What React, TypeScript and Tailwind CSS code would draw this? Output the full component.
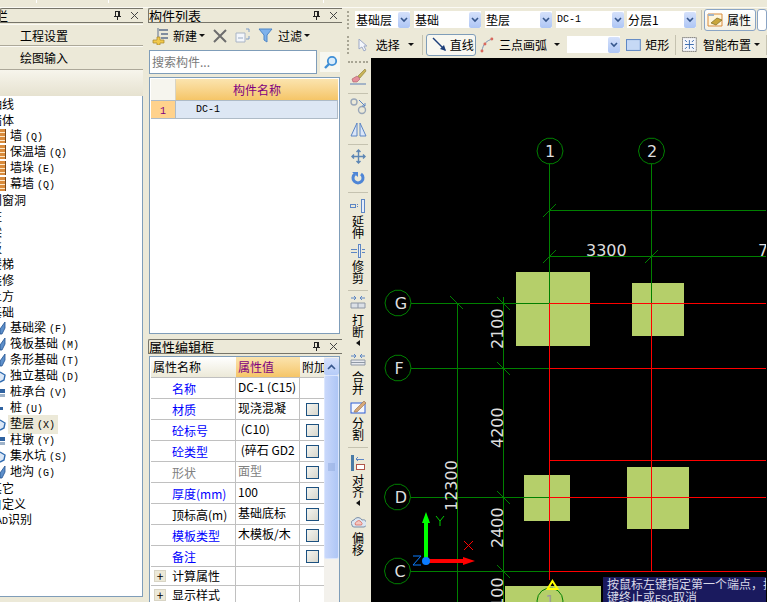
import { ReactNode } from "react";

const CJK = "[font-family:'Noto_Sans_CJK_SC','Liberation_Sans',sans-serif]";
const MONO = "[font-family:'Liberation_Mono','Noto_Sans_CJK_SC',monospace]";

// small dock title buttons
const PinClose = () => (
  <div className="flex items-center gap-[8px] pr-[4px]">
    <svg width="9" height="11" viewBox="0 0 9 11" shapeRendering="crispEdges">
      <path d="M2 1h5v5H2zM1 6h7v1H1zM4 7h1v3H4zM5 1h1v5H5z" fill="#222" />
      <path d="M3 2h2v4H3z" fill="#ece9d8" />
    </svg>
    <svg width="9" height="9" viewBox="0 0 9 9">
      <path d="M1 1l7 7M8 1l-7 7" stroke="#444" strokeWidth="1" fill="none" />
    </svg>
  </div>
);

const DockTitle = ({ title, clip }: { title: string; clip?: boolean }) => (
  <div className="h-[15px] flex items-center justify-between border-y border-l border-[#77756a] bg-[#ece9d8] overflow-hidden rounded-tl-[2px]">
    <span className={`text-[13px] leading-[14px] whitespace-nowrap ${clip ? "-ml-[58px]" : ""}`}>{title}</span>
    <PinClose />
  </div>
);

const Combo = ({ text, w, mono }: { text?: string; w: string; mono?: boolean }) => (
  <div className={`${w} h-[17px] bg-white flex items-center justify-between`}>
    <span className={`pl-[1px] whitespace-nowrap ${mono ? `${MONO} text-[10px]` : "text-[12px]"}`}>{text}</span>
    <span className="w-[12px] h-[16px] bg-gradient-to-b from-[#d5e1fb] to-[#aec6f5] flex items-center justify-center rounded-[2px]">
      <svg width="8" height="6" viewBox="0 0 8 6">
        <path d="M1 1l3 3 3-3" stroke="#36568c" strokeWidth="1.6" fill="none" />
      </svg>
    </span>
  </div>
);

const Caret = () => (
  <svg width="6" height="4" viewBox="0 0 6 4" className="shrink-0">
    <path d="M0 0h6L3 3z" fill="#111" />
  </svg>
);

const Sep = () => <div className="w-px h-[20px] bg-[#c5c2b0]" />;

const treeRows: { t: string; k?: string; icon?: string; sel?: boolean }[] = [
  { t: "轴线" },
  { t: "墙体" },
  { t: "墙", k: "(Q)", icon: "brick" },
  { t: "保温墙", k: "(Q)", icon: "brick" },
  { t: "墙垛", k: "(E)", icon: "brick" },
  { t: "幕墙", k: "(Q)", icon: "brick" },
  { t: "门窗洞" },
  { t: "柱" },
  { t: "梁" },
  { t: "板" },
  { t: "楼梯" },
  { t: "装修" },
  { t: "土方" },
  { t: "基础" },
  { t: "基础梁", k: "(F)", icon: "blue" },
  { t: "筏板基础", k: "(M)", icon: "blue" },
  { t: "条形基础", k: "(T)", icon: "blue" },
  { t: "独立基础", k: "(D)", icon: "ring" },
  { t: "桩承台", k: "(V)", icon: "small" },
  { t: "桩", k: "(U)", icon: "dot" },
  { t: "垫层", k: "(X)", icon: "ring", sel: true },
  { t: "柱墩", k: "(Y)", icon: "small" },
  { t: "集水坑", k: "(S)", icon: "ring" },
  { t: "地沟", k: "(G)", icon: "blue" },
  { t: "其它" },
  { t: "自定义" },
  { t: "CAD识别" },
];

const TreeIcon = ({ kind }: { kind: string }) => {
  if (kind === "brick")
    return (
      <svg width="6" height="14" viewBox="0 0 6 14" shapeRendering="crispEdges">
        <rect width="5" height="14" fill="#d98b3c" />
        <path d="M0 3h5M0 7h5M0 11h5" stroke="#fde9c9" />
        <path d="M5 0v14" stroke="#7a4a1c" />
      </svg>
    );
  if (kind === "ring")
    return (
      <svg width="6" height="14" viewBox="0 0 6 14">
        <path d="M0 3l5 3-1 5-4 2" stroke="#2f6bb0" strokeWidth="1.4" fill="#dbe7f6" />
      </svg>
    );
  if (kind === "small")
    return (
      <svg width="6" height="14" viewBox="0 0 6 14" shapeRendering="crispEdges">
        <rect x="0" y="4" width="5" height="4" fill="#2f62a0" />
        <rect x="0" y="9" width="5" height="3" fill="#9fb3c9" />
      </svg>
    );
  if (kind === "dot")
    return (
      <svg width="6" height="14" viewBox="0 0 6 14" shapeRendering="crispEdges">
        <rect x="0" y="6" width="3" height="3" fill="#2f62a0" />
      </svg>
    );
  return (
    <svg width="6" height="14" viewBox="0 0 6 14">
      <path d="M0 8L5 1v6L2 13H0z" fill="#5d8fca" stroke="#22528f" strokeWidth=".8" />
    </svg>
  );
};

const LeftPanel = () => (
  <div className="w-[143px] shrink-0 flex flex-col">
    <DockTitle title="模块导航栏" clip />
    <div className="h-[23px] mt-[1px] border-y border-[#fbfaf4] bg-[#ece9d8] flex items-center pl-[20px] text-[12px] shadow-[inset_0_-1px_0_#aca899]">
      工程设置
    </div>
    <div className="h-[23px] border-b border-[#aca899] bg-[#ece9d8] flex items-center pl-[20px] text-[12px]">
      绘图输入
    </div>
    <div className="h-[26px] bg-gradient-to-b from-[#f7f5ec] to-[#e6e2d0]" />
    <div className="h-[501px] bg-white border-r border-b border-[#7f9db9] overflow-hidden">
      {treeRows.map((r) => (
        <div key={r.t} className="h-[16px] flex items-center whitespace-nowrap text-[12px] leading-[16px]">
          {r.icon ? (
            <>
              <span className="w-[8px] shrink-0 flex">
                <TreeIcon kind={r.icon} />
              </span>
              <span className={`pl-[2px] pr-[3px] ${r.sel ? "bg-[#ece9d8]" : ""}`}>
                {r.t}
                <span className={`${MONO} text-[10px] pl-[3px]`}>{r.k}</span>
              </span>
            </>
          ) : (
            <span className="-ml-[10px]">
              {r.t.startsWith("CAD") ? (
                <>
                  <span className={`${MONO} text-[10px]`}>CAD</span>识别
                </>
              ) : (
                r.t
              )}
            </span>
          )}
        </div>
      ))}
    </div>
  </div>
);

const propRows: { n: string; c: string; v: string; vc?: string; check?: boolean }[] = [
  { n: "名称", c: "text-[#0000ff]", v: "DC-1 (C15)" },
  { n: "材质", c: "text-[#0000ff]", v: "现浇混凝", check: true },
  { n: "砼标号", c: "text-[#0000ff]", v: " (C10)", check: true },
  { n: "砼类型", c: "text-[#0000ff]", v: " (碎石 GD2", check: true },
  { n: "形状", c: "text-[#808080]", v: "面型", vc: "text-[#808080]", check: true },
  { n: "厚度(mm)", c: "text-[#0000ff]", v: "100", check: true },
  { n: "顶标高(m)", c: "text-black", v: "基础底标", check: true },
  { n: "模板类型", c: "text-[#0000ff]", v: "木模板/木", check: true },
  { n: "备注", c: "text-[#0000ff]", v: "", check: true },
];

const CheckBox = () => (
  <span className="block w-[13px] h-[13px] border border-[#1c5180] bg-gradient-to-br from-[#f4f4ef] to-[#d8d7cd]" />
);

const MidPanel = () => (
  <div className="w-[194px] shrink-0 ml-[5px] flex flex-col">
    <DockTitle title="构件列表" />
    <div className="h-[25px] flex items-center pl-[4px] text-[12px]">
      <svg width="18" height="18" viewBox="0 0 18 18">
        <path d="M7 3h9M9 7h7M9 11h7" stroke="#5c6f8c" strokeWidth="1.3" />
        <path d="M6 1v10" stroke="#5c6f8c" />
        <path d="M1 13h4v-3h3v3h4v3H8v2H5v-2H1z" fill="#f2c94c" stroke="#a8842a" strokeWidth=".7" />
      </svg>
      <span className="ml-[3px]">新建</span>
      <span className="ml-[2px] mr-[8px]"><Caret /></span>
      <svg width="14" height="14" viewBox="0 0 14 14">
        <path d="M1 1l12 12M13 1L1 13" stroke="#6d6d6d" strokeWidth="2" />
      </svg>
      <svg width="16" height="15" viewBox="0 0 16 15" className="ml-[8px]">
        <path d="M1 5h9v9H1z" fill="#f3f6fb" stroke="#a9b4c4" />
        <path d="M3 9h5v2H3z" fill="#c6d0de" />
        <path d="M11 1h3v3M14 8v3h-3" stroke="#7d9bc7" fill="none" />
      </svg>
      <svg width="15" height="15" viewBox="0 0 15 15" className="ml-[7px]">
        <path d="M1 1h13L9 7v7l-3-2V7z" fill="#7fb2ec" stroke="#4f86c6" />
      </svg>
      <span className="ml-[5px]">过滤</span>
      <span className="ml-[2px]"><Caret /></span>
    </div>
    <div className="h-[24px] mt-[2px] flex items-center pl-[1px]">
      <div className="w-[168px] h-[24px] bg-white border border-[#7f9db9] flex items-center pl-[2px] text-[12px] text-[#7a7a7a]">
        搜索构件...
      </div>
      <div className="ml-[3px] w-[20px] h-[20px] bg-[#f7f7f0] flex items-center justify-center">
        <svg width="15" height="15" viewBox="0 0 15 15">
          <circle cx="9" cy="6" r="4.2" fill="#d9ecfb" stroke="#3f8fd6" strokeWidth="1.8" />
          <path d="M6 9l-4 4" stroke="#3f8fd6" strokeWidth="2.4" />
        </svg>
      </div>
    </div>
    <div className="h-[257px] mt-[3px] ml-[1px] mr-[2px] bg-white border border-[#7f9db9] pl-[1px] pt-[1px] pr-[1px]">
      <div className="flex h-[21px]">
        <div className="w-[25px] bg-[#f6f5ee] border-r border-[#d8d4c4]" />
        <div className="flex-1 bg-gradient-to-b from-[#fbe4ae] to-[#f5c567] flex items-center justify-center text-[12px] text-[#800080]">
          构件名称
        </div>
      </div>
      <div className="flex h-[19px] border-b border-[#aebbc7] border-t">
        <div className="w-[25px] bg-[#ffd28c] border-r border-[#aebbc7] text-[#800080] text-[10px] leading-[18px] pl-[9px]">
          <span className={MONO}>1</span>
        </div>
        <div className={`flex-1 bg-[#dde7f4] border-r border-[#aebbc7] pl-[20px] text-[10px] leading-[18px] ${MONO}`}>
          DC-1
        </div>
      </div>
    </div>
    <div className="h-[5px]" />
    <DockTitle title="属性编辑框" />
    <div className="flex-1 mt-[2px] ml-[1px] mr-[2px] flex bg-white border-l border-t border-r border-[#7f9db9] pl-[1px] overflow-hidden">
      <div className="w-[173px] shrink-0 text-[12px]">
        <div className="grid grid-cols-[85px_64px_24px] h-[21px] border-b border-[#c0c0c0]">
          <div className="bg-gradient-to-b from-white to-[#ece9d8] pl-[2px] leading-[20px]">属性名称</div>
          <div className="bg-gradient-to-b from-[#fbe4ae] to-[#f5c567] text-[#800080] pl-[2px] leading-[20px]">属性值</div>
          <div className="bg-gradient-to-b from-white to-[#ece9d8] pl-[2px] leading-[20px] overflow-hidden whitespace-nowrap">附加</div>
        </div>
        {propRows.map((r) => (
          <div key={r.n} className="grid grid-cols-[85px_64px_24px] h-[21px] border-b border-[#c0c0c0]">
            <div className={`border-r border-[#c0c0c0] pl-[21px] leading-[21px] ${r.c}`}>{r.n}</div>
            <div className={`border-r border-[#c0c0c0] pl-[2px] leading-[17px] whitespace-pre overflow-hidden ${r.vc ?? ""}`}>{r.v}</div>
            <div className="flex items-center justify-center">{r.check && <CheckBox />}</div>
          </div>
        ))}
        {["计算属性", "显示样式"].map((g) => (
          <div key={g} className="grid grid-cols-[85px_64px_24px] h-[19px] border-b border-[#c0c0c0]">
            <div className="border-r border-[#c0c0c0] flex items-center pl-[3px]">
              <span className="w-[12px] h-[12px] bg-[#ece9d8] border border-[#d8d4c4] flex items-center justify-center text-[12px] leading-none">+</span>
              <span className="ml-[6px]">{g}</span>
            </div>
            <div className="border-r border-[#c0c0c0]" />
            <div />
          </div>
        ))}
      </div>
      <div className="w-[15px] shrink-0 bg-[#f3f1ec] flex flex-col">
        <div className="h-[17px] mt-[1px] bg-gradient-to-b from-[#d5e1fb] to-[#b5cbf8] rounded-[2px] flex items-center justify-center">
          <svg width="9" height="6" viewBox="0 0 9 6">
            <path d="M1 5l3.5-3.5L8 5" stroke="#36568c" strokeWidth="1.6" fill="none" />
          </svg>
        </div>
        <div className="h-[184px] bg-gradient-to-r from-[#c9d8fb] to-[#aec6f5] rounded-[2px] border border-[#dbe6fd] flex items-center justify-center">
          <svg width="7" height="8" viewBox="0 0 7 8">
            <path d="M0 1h7M0 3h7M0 5h7M0 7h7" stroke="#8fa9dc" />
          </svg>
        </div>
      </div>
    </div>
  </div>
);

// one button on the vertical edit strip
const Tool = ({ mt, icon, text, caret }: { mt: string; icon: ReactNode; text?: string[]; caret?: boolean }) => (
  <div className={`flex flex-col items-center ${mt}`}>
    {icon}
    {text?.map((c) => (
      <span key={c} className="text-[12px] leading-[12px]">{c}</span>
    ))}
    {caret && (
      <svg width="4" height="6" viewBox="0 0 4 6" className="mt-[2px]">
        <path d="M4 0v6L0 3z" fill="#111" />
      </svg>
    )}
  </div>
);

const HSep = ({ mt }: { mt: string }) => <div className={`w-[20px] h-px bg-[#c5c2b0] ${mt}`} />;

const EditStrip = () => (
  <div className="w-[26px] shrink-0 flex flex-col items-center bg-[#ece9d8] h-[544px] overflow-hidden">
    <div className="mt-[3px] w-[20px] h-[2px] border-t-2 border-dotted border-[#a8a594]" />
    <Tool mt="mt-[5px]" icon={
      <svg width="18" height="18" viewBox="0 0 18 18">
        <path d="M16 1L9 8l2 2 6-7z" fill="#c9b458" stroke="#8a7a33" strokeWidth=".6" />
        <path d="M3 11l5-3 3 3-3 3H4z" fill="#e58f9a" stroke="#a85a66" strokeWidth=".6" />
        <path d="M1 16h16" stroke="#5d7fb5" />
      </svg>
    } />
    <HSep mt="mt-[7px]" />
    <Tool mt="mt-[4px]" icon={
      <svg width="17" height="17" viewBox="0 0 17 17">
        <circle cx="4" cy="4" r="3" fill="none" stroke="#9aa7b8" strokeWidth="1.4" />
        <circle cx="12" cy="12" r="3.5" fill="none" stroke="#9aa7b8" strokeWidth="1.4" />
        <path d="M9 2l6 6M12 8h3V5" stroke="#5d86c4" fill="none" />
      </svg>
    } />
    <Tool mt="mt-[6px]" icon={
      <svg width="17" height="17" viewBox="0 0 17 17">
        <path d="M7 2v13H1zM10 2v13h6z" fill="#dbe6f8" stroke="#5d86c4" />
      </svg>
    } />
    <HSep mt="mt-[6px]" />
    <Tool mt="mt-[4px]" icon={
      <svg width="15" height="15" viewBox="0 0 15 15">
        <path d="M7.500 1v13M1 7.500h13M5.500 3l2-2 2 2M5.500 12l2 2 2-2M3 5.500l-2 2 2 2M12 5.500l2 2-2 2" stroke="#5d86b4" fill="none" strokeWidth="1.4" />
      </svg>
    } />
    <Tool mt="mt-[7px]" icon={
      <svg width="14" height="15" viewBox="0 0 14 15">
        <path d="M4 3a5 5 0 1 0 6 0" fill="none" stroke="#4f86d6" strokeWidth="3" />
        <path d="M1 1h6v5z" fill="#4f86d6" />
      </svg>
    } />
    <HSep mt="mt-[6px]" />
    <Tool mt="mt-[5px]" text={["延", "伸"]} icon={
      <svg width="16" height="15" viewBox="0 0 16 15" className="mb-[2px]" shapeRendering="crispEdges">
        <path d="M0 6h5v3H0zM7 6h1M7 8h1" fill="none" stroke="#5d86c4" />
        <path d="M11 1h3v13h-3z" fill="#e6edf9" stroke="#5d86c4" />
      </svg>
    } />
    <Tool mt="mt-[4px]" text={["修", "剪"]} icon={
      <svg width="16" height="15" viewBox="0 0 16 15" className="mb-[2px]" shapeRendering="crispEdges">
        <path d="M1 6h6M1 9h6M12 6h3M12 9h3" stroke="#5d86c4" />
        <path d="M8 1h2v13H8z" fill="#e6edf9" stroke="#5d86c4" />
      </svg>
    } />
    <HSep mt="mt-[6px]" />
    <Tool mt="mt-[4px]" caret text={["打", "断"]} icon={
      <svg width="16" height="15" viewBox="0 0 16 15" className="mb-[4px]">
        <path d="M1 3h5M15 3h-5M4 1l2 2-2 2M12 1l-2 2 2 2" stroke="#5d86c4" fill="none" />
        <path d="M1 8h14v5H1zM8 8v5" fill="#dbe0e6" stroke="#8f98a5" />
      </svg>
    } />
    <Tool mt="mt-[7px]" text={["合", "并"]} icon={
      <svg width="16" height="13" viewBox="0 0 16 13" className="mb-[5px]">
        <path d="M1 3h5M15 3h-5M4 1l2 2-2 2M12 1l-2 2 2 2" stroke="#5d86c4" fill="none" />
        <path d="M1 7h14v5H1zM1 9.500h14" fill="#e6e8ee" stroke="#8f98a5" />
      </svg>
    } />
    <Tool mt="mt-[4px]" text={["分", "割"]} icon={
      <svg width="17" height="15" viewBox="0 0 17 15" className="mb-[3px]">
        <rect x="1" y="4" width="14" height="10" fill="#f4f6fb" stroke="#2e5fd6" />
        <path d="M5 11L14 2l2 2-9 9H4z" fill="#d6a97a" stroke="#9a6f45" strokeWidth=".6" />
      </svg>
    } />
    <HSep mt="mt-[6px]" />
    <Tool mt="mt-[7px]" caret text={["对", "齐"]} icon={
      <svg width="14" height="16" viewBox="0 0 14 16" className="mb-[3px]" shapeRendering="crispEdges">
        <rect x="0" y="0" width="3" height="16" fill="#4a7ba6" />
        <path d="M5 4h8M7 2L5 4l2 2" stroke="#5d86c4" fill="none" />
        <path d="M5 9h8v5H5z" fill="#fff" stroke="#b0564a" />
      </svg>
    } />
    <Tool mt="mt-[10px]" text={["偏", "移"]} icon={
      <svg width="15" height="13" viewBox="0 0 15 13" className="mb-[3px]">
        <path d="M1 9a3 3 0 0 1 2-5 4.500 4.500 0 0 1 8 0 3 3 0 0 1 2 7H3a2 2 0 0 1-2-2z" fill="#dce6f2" stroke="#7b8ea6" />
        <path d="M4.500 9a2 2 0 0 1 1-3 2.500 2.500 0 0 1 4.500 0 2 2 0 0 1 .5 3z" fill="#f5c6c0" stroke="#d9695d" strokeWidth=".8" />
      </svg>
    } />
  </div>
);

// octagonal axis bubble as the CAD view draws it
const bubble = (cx: number, cy: number, r: number) =>
  Array.from({ length: 14 }, (_, i) => {
    const a = (i / 14) * Math.PI * 2;
    return `${(cx + r * Math.cos(a)).toFixed(1)},${(cy + r * Math.sin(a)).toFixed(1)}`;
  }).join(" ");

const GREEN = "#008000";
const RED = "#ff0000";
const PAD = "#b5cf6a";
const LABEL = "#dedede";

const CadView = () => (
  <div className="relative flex-1 h-[544px] bg-black overflow-hidden">
    <svg width="395" height="544" viewBox="372 58 395 544" className="block">
      <g fill={PAD} shapeRendering="crispEdges">
        <rect x="517" y="272" width="74" height="74" />
        <rect x="633" y="283" width="52" height="53" />
        <rect x="525" y="475" width="46" height="46" />
        <rect x="628" y="467" width="62" height="62" />
        <rect x="506" y="586" width="96" height="16" />
      </g>
      <g stroke={GREEN} fill="none" shapeRendering="crispEdges">
        <path d="M550.5 164V303M652.500 164V303" />
        <path d="M550 210.500H767M550 256.500H767" />
        <path d="M412 303.500H550M412 368.500H550M412 497.500H550M412 571.500H550" />
        <path d="M458.500 303V602M504.500 297V602" />
      </g>
      <g stroke={GREEN} fill="none">
        <path d="M544 217l13-13M544 263l13-13M646 263l13-13" />
        <path d="M451 296l13 13M498 297l13 13M498 362l13 13M498 491l13 13M498 565l13 13" />
        <polygon points={bubble(551, 151, 13)} />
        <polygon points={bubble(652.5, 151, 13)} />
        <polygon points={bubble(399, 303, 13)} />
        <polygon points={bubble(399, 368, 13)} />
        <polygon points={bubble(398.5, 497, 13)} />
        <polygon points={bubble(398.5, 571, 13)} />
        <polygon points={bubble(551, 601, 13)} />
      </g>
      <g stroke={RED} fill="none" shapeRendering="crispEdges">
        <path d="M550.500 303V580M652.500 303V571" />
        <path d="M550 303.500H767M550 368.500H767M550 460.500H767M550 497.500H767M550 571.500H767" />
      </g>
      <g fill={LABEL} fontFamily="'DejaVu Sans',sans-serif" fontSize="16">
        <text x="551" y="157" textAnchor="middle">1</text>
        <text x="653" y="157" textAnchor="middle">2</text>
        <text x="402" y="309" textAnchor="middle">G</text>
        <text x="400" y="374" textAnchor="middle">F</text>
        <text x="402" y="503" textAnchor="middle">D</text>
        <text x="401" y="577" textAnchor="middle">C</text>
        <text x="587" y="256">3300</text>
        <text x="759" y="256">7</text>
        <text transform="translate(504 349) rotate(-90)">2100</text>
        <text transform="translate(504 448) rotate(-90)">4200</text>
        <text transform="translate(504 548) rotate(-90)">2400</text>
        <text transform="translate(504 618) rotate(-90)">2100</text>
        <text transform="translate(458 511) rotate(-90)">12300</text>
      </g>
      <text x="551" y="605" textAnchor="middle" fill="#9a9a9a" fontFamily="'DejaVu Sans',sans-serif" fontSize="14">1</text>
      <path d="M553.500 581l5 8h-10z" fill="none" stroke="#ffff00" strokeWidth="2" />
      {/* UCS marker */}
      <path d="M427 561V520" stroke="#00ff00" strokeWidth="4" />
      <path d="M427 512l4 11h-8z" fill="#00ff00" />
      <path d="M427 561H466" stroke={RED} strokeWidth="4" />
      <path d="M476 561l-12-4v8z" fill={RED} />
      <circle cx="427" cy="561" r="4" fill="#0a7cff" />
      <path d="M437 516l4 5 4-5M441 521v5" stroke="#00c800" fill="none" />
      <path d="M465 541l9 9M474 541l-9 9" stroke={RED} />
      <path d="M414 556h8l-8 9h8" stroke="#0a7cff" fill="none" />
    </svg>
    <div className="absolute left-[232px] bottom-0 w-[163px] h-[25px] bg-[#1a1a5e] text-[#d8d8e8] text-[12px] leading-[13px] pl-[4px] whitespace-nowrap overflow-hidden">
      <div>按鼠标左键指定第一个端点，按</div>
      <div>键终止或<span className={`${MONO} text-[10px]`}>ESC</span>取消</div>
    </div>
  </div>
);

const RightPanel = () => (
  <div className="flex-1 ml-[3px] flex flex-col min-w-0 -mt-[8px] overflow-hidden">
    <div className="h-[8px]" />
    {/* first toolbar row */}
    <div className="h-[23px] flex items-center pl-[2px] text-[12px]">
      <div className="w-[3px] h-[18px] border-l-2 border-dotted border-[#a8a594]" />
      <div className="w-[5px]" />
      <Combo text="基础层" w="w-[56px]" />
      <div className="w-[4px]" />
      <Combo text="基础" w="w-[68px]" />
      <div className="w-[4px]" />
      <Combo text="垫层" w="w-[68px]" />
      <div className="w-[4px]" />
      <Combo text="DC-1" w="w-[69px]" mono />
      <div className="w-[3px]" />
      <Combo text="分层1" w="w-[70px]" />
      <div className="w-[5px]" />
      <Sep />
      <div className="w-[2px]" />
      <div className="w-[52px] h-[22px] border border-[#8aa4c4] rounded-[3px] bg-gradient-to-b from-white to-[#f3f1e6] flex items-center pl-[2px] shrink-0">
        <svg width="18" height="16" viewBox="0 0 18 16">
          <path d="M1 2h14v12H1z" fill="#fff6dc" stroke="#d98b3c" />
          <path d="M1 2h6v2H1z" fill="#9fb3c9" />
          <path d="M4 11l6-5 5 2-6 5z" fill="#c9a63c" stroke="#7a6a22" strokeWidth=".7" />
        </svg>
        <span className="ml-[2px]">属性</span>
      </div>
      <div className="ml-[1px] w-[10px] h-[22px] bg-white border border-[#8aa4c4] rounded-[3px] shrink-0" />
    </div>
    {/* second toolbar row */}
    <div className="h-[27px] flex items-center pl-[2px] text-[12px] whitespace-nowrap">
      <div className="w-[3px] h-[18px] border-l-2 border-dotted border-[#a8a594]" />
      <svg width="10" height="14" viewBox="0 0 10 14" className="ml-[8px]">
        <path d="M1 1v10l3-2 2 4 2-1-2-4h3z" fill="#f4f6fb" stroke="#9aa7c4" />
      </svg>
      <span className="ml-[8px]">选择</span>
      <span className="ml-[8px] mr-[8px]"><Caret /></span>
      <Sep />
      <div className="ml-[3px] w-[51px] h-[22px] border border-[#7f9db9] rounded-[3px] bg-[#f8f7f0] flex items-center pl-[5px]">
        <svg width="15" height="15" viewBox="0 0 15 15">
          <path d="M1 1l12 12" stroke="#1d3f7a" strokeWidth="1.4" />
          <path d="M14 14l-6-2 4-4z" fill="#1d3f7a" />
        </svg>
        <span className="ml-[3px]">直线</span>
      </div>
      <svg width="14" height="16" viewBox="0 0 14 16" className="ml-[4px]">
        <path d="M2 14C3 7 7 3 13 2" stroke="#7b93b5" fill="none" />
        <circle cx="2" cy="14" r="1.500" fill="#d9695d" />
        <circle cx="5" cy="7" r="1.500" fill="#d9695d" />
        <circle cx="12" cy="2" r="1.500" fill="#d9695d" />
      </svg>
      <span className="ml-[5px]">三点画弧</span>
      <span className="ml-[7px] mr-[7px]"><Caret /></span>
      <Combo w="w-[54px]" />
      <svg width="15" height="12" viewBox="0 0 15 12" className="ml-[6px]">
        <rect x=".5" y=".5" width="14" height="11" fill="#c6d9f5" stroke="#5d86c4" />
      </svg>
      <span className="ml-[4px]">矩形</span>
      <div className="ml-[6px]"><Sep /></div>
      <svg width="15" height="15" viewBox="0 0 15 15" className="ml-[6px]">
        <rect x=".5" y=".5" width="14" height="14" fill="#f5f6fa" stroke="#444" strokeDasharray="1 1" />
        <path d="M7.500 3v9M3 7.500h9M3 3l2 2M12 3l-2 2M3 12l2-2M12 12l-2-2" stroke="#3f6fb0" />
      </svg>
      <span className="ml-[6px]">智能布置</span>
      <span className="ml-[3px] mr-[6px]"><Caret /></span>
      <Sep />
    </div>
    <div className="flex">
      <EditStrip />
      <CadView />
    </div>
  </div>
);

export default function App() {
  return (
    <div className={`w-[767px] h-[602px] bg-[#ece9d8] text-black overflow-hidden ${CJK}`}>
      <div className="h-[8px] border-b border-[#fbfaf4] flex">
        <div className="w-[37px] h-[3px] border-r border-white" />
        <div className="w-[72px] h-[3px] border-r border-white" />
        <div className="w-[215px] h-[3px] border-r border-white" />
      </div>
      <div className="flex h-[594px]">
        <LeftPanel />
        <MidPanel />
        <RightPanel />
      </div>
    </div>
  );
}
